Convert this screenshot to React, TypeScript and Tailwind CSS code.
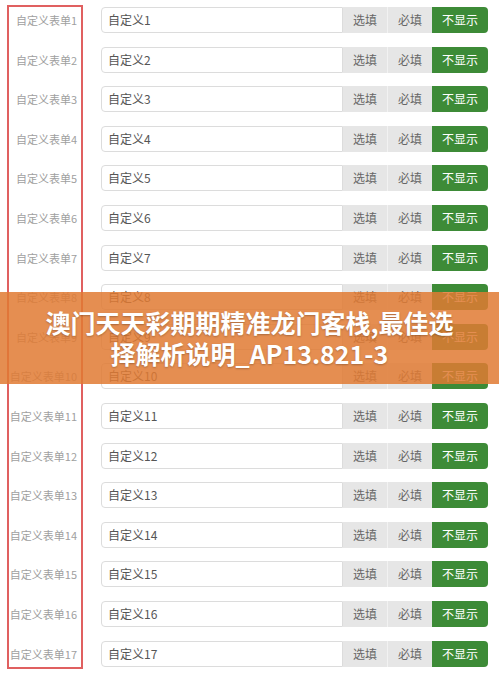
import React from 'react';

const rows = Array.from({ length: 17 }, (_, i) => i + 1);

export default function App() {
  return (
    <div
      className="relative w-[499px] h-[676px] overflow-hidden bg-white"
      style={{ fontFamily: '"Noto Sans CJK SC", "Noto Sans", sans-serif' }}
    >
      <div className="flex pl-[7px] pt-[5px]">
        {/* label column in red frame */}
        <div className="w-[76px] border-2 border-[#e06060] pr-[4px] flex flex-col gap-[13.6px]">
          {rows.map(n => (
            <div key={n} className="h-[26px] leading-[26px] text-right text-[11px] text-[#a0a0a0] whitespace-nowrap">
              自定义表单{n}
            </div>
          ))}
        </div>

        {/* fields column */}
        <div className="ml-[18px] pt-[2px] flex flex-col gap-[13.6px]">
          {rows.map(n => (
            <div key={n} className="flex h-[26px]">
              <div className="w-[242px] border border-[#dcdcdc] rounded-l-sm pl-[6px] text-[12px] leading-[24px] text-[#555]">
                自定义{n}
              </div>
              <div className="w-[45px] bg-[#e6e6e6] border-r border-[#f2f2f2] text-center text-[12px] leading-[26px] text-[#666]">
                选填
              </div>
              <div className="w-[44px] bg-[#e6e6e6] text-center text-[12px] leading-[26px] text-[#666]">
                必填
              </div>
              <div className="w-[56px] bg-[#3d8b37] rounded-r-sm text-center text-[12px] leading-[26px] text-white">
                不显示
              </div>
            </div>
          ))}
        </div>
      </div>

      {/* overlay banner */}
      <div className="absolute left-0 right-0 top-[292px] h-[92px] bg-[#e07a33]/85 flex items-center justify-center">
        <div className="text-center text-white font-bold text-[25px] leading-[31px] [text-shadow:0_1px_2px_rgba(0,0,0,0.25)]">
          澳门天天彩期期精准龙门客栈,最佳选
          <br />
          择解析说明_AP13.821-3
        </div>
      </div>
    </div>
  );
}
